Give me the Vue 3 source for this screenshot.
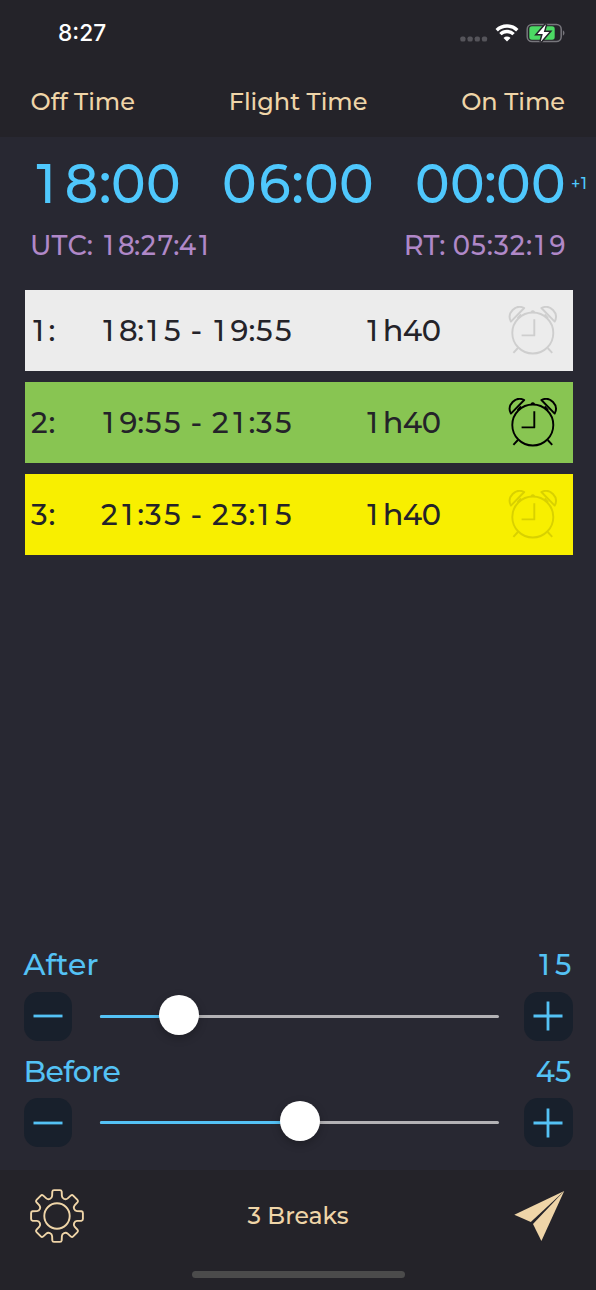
<template>
  <div class="screen">
    <header class="header">
      <div class="status">
        <span class="clock">8:27</span>
        <div class="indicators">
          <svg class="dots" width="28" height="6" viewBox="0 0 28 6">
            <rect v-for="n in 4" :key="n" :x="(n - 1) * 7.2 + 0.3" y="0.4" width="5.2" height="5.2" rx="1.9" />
          </svg>
          <svg class="wifi" width="24" height="18" viewBox="0 0 24 18">
            <path d="M1.7 6.2a14.8 14.8 0 0 1 20.6 0" />
            <path d="M5.4 10.1a9.5 9.5 0 0 1 13.2 0" />
            <path class="solid" d="M12 17.4 8.5 13.9a5 5 0 0 1 7 0Z" />
          </svg>
          <svg class="battery" width="39" height="20" viewBox="0 0 39 20">
            <rect class="shell" x="1.2" y="1.4" width="34" height="17.2" rx="4.8" />
            <path class="nub" d="M36.9 7.2q1.6 1 1.6 2.8t-1.6 2.8Z" />
            <rect class="level" x="3.3" y="3.3" width="25.4" height="13.4" rx="2.6" />
            <path class="bolt" d="M19.9 1.2 11.4 11h5.4l-2.1 7.8L23.2 9h-5.4Z" />
          </svg>
        </div>
      </div>
      <div class="labels">
        <span>Off Time</span>
        <span>Flight Time</span>
        <span>On Time</span>
      </div>
    </header>

    <main class="content">
      <div class="times">
        <Digits text="18:00" />
        <Digits text="06:00" />
        <span class="on-time"><Digits text="00:00" /><sup class="next-day">+1</sup></span>
      </div>
      <div class="counters">
        <Digits text="UTC: 18:27:41" />
        <Digits text="RT: 05:32:19" />
      </div>

      <ul class="breaks">
        <li v-for="item in breaks" :key="item.id" class="break" :class="item.color">
          <Digits :text="item.id + ':'" />
          <Digits :text="item.start + ' - ' + item.end" />
          <Digits :text="item.duration" />
          <svg class="alarm" :class="{ active: item.alarm }" width="50" height="50" viewBox="0 0 50 50">
            <circle cx="24.8" cy="27" r="20.5" />
            <path d="M26.3 13.2v16.2H13.6" />
            <path d="M2.9 15.6A10 10 0 0 1 16.2 2Z" />
            <path d="M46.7 15.6A10 10 0 0 0 33.4 2Z" />
            <path d="m13 8.5-3.4 3.6M36.6 8.5l3.4 3.6" />
            <path d="M9.9 42 5.4 46.9M39.7 42l4.5 4.9" />
            <path d="M23.3 6q1.5-1.8 3 0" />
          </svg>
        </li>
      </ul>

      <div class="sliders">
        <section v-for="slider in sliders" :key="slider.name" class="slider">
          <div class="slider-head">
            <span :class="slider.name.toLowerCase()">{{ slider.name }}</span>
            <Digits :text="String(slider.value)" />
          </div>
          <div class="slider-row">
            <button class="step" @click="change(slider, -5)">
              <svg width="30" height="30" viewBox="0 0 30 30"><path d="M.5 15h29" /></svg>
            </button>
            <div class="track">
              <div class="filled" :style="{ width: position(slider) + 'px' }"></div>
              <div class="thumb" :style="{ left: position(slider) + 'px' }"></div>
            </div>
            <button class="step" @click="change(slider, 5)">
              <svg width="30" height="30" viewBox="0 0 30 30"><path d="M.5 15h29M15 .5v29" /></svg>
            </button>
          </div>
        </section>
      </div>
    </main>

    <footer class="footer">
      <div class="toolbar">
        <svg class="gear" width="54" height="54" viewBox="-27 -27 54 54">
          <path :d="gearPath" />
          <circle r="12.7" />
        </svg>
        <span class="count">{{ breaks.length }} Breaks</span>
        <svg class="send" width="51" height="52" viewBox="0 0 51 52">
          <path d="M50.2 1 .3 24.7l16.5 7.4Z" />
          <path d="M50.2 1 19 34.1l8.4 17Z" />
        </svg>
      </div>
      <div class="home-bar"></div>
    </footer>
  </div>
</template>

<script setup>
import { ref, reactive, h } from 'vue';

// text whose digits all take the same width
const charClass = (c) => {
  if (c === '1') return 'digit one';
  if (/\d/.test(c)) return 'digit';
  if (c === ':') return 'colon';
  return c === ' ' ? 'space' : null;
};
const Digits = (props) =>
  h('span', { class: 'digits' }, [...props.text].map((c) => h('span', { class: charClass(c) }, c)));
Digits.props = ['text'];

const breaks = ref([
  { id: 1, start: '18:15', end: '19:55', duration: '1h40', color: 'white', alarm: false },
  { id: 2, start: '19:55', end: '21:35', duration: '1h40', color: 'green', alarm: true },
  { id: 3, start: '21:35', end: '23:15', duration: '1h40', color: 'yellow', alarm: false },
]);

const sliders = reactive([
  { name: 'After', value: 15, max: 90 },
  { name: 'Before', value: 45, max: 90 },
]);

// the thumb stays inside the 400px track
const position = (slider) => 19.5 + (slider.value / slider.max) * 361;

const change = (slider, step) => {
  slider.value = Math.min(slider.max, Math.max(0, slider.value + step));
};

// one tooth of the gear, repeated 8 times around the centre
const tooth = [
  ['C', [-5.7, -17.7], [-5, -18.4], [-4.9, -20]],
  ['L', [-4.7, -24.4]],
  ['Q', [-4.5, -25.9], [-3, -25.9]],
  ['L', [3, -25.9]],
  ['Q', [4.5, -25.9], [4.7, -24.4]],
  ['L', [4.9, -20]],
  ['C', [5, -18.4], [5.7, -17.7], [7.1, -17.1]],
];
const rotate = ([x, y], a) =>
  `${(x * Math.cos(a) - y * Math.sin(a)).toFixed(2)} ${(x * Math.sin(a) + y * Math.cos(a)).toFixed(2)}`;
let gearPath = 'M-7.1 -17.1';
for (let i = 0; i < 8; i++) {
  for (const [cmd, ...points] of tooth) {
    gearPath += cmd + points.map((p) => rotate(p, (i * Math.PI) / 4)).join(' ');
  }
}
gearPath += 'Z';
</script>

<style>
body {
  margin: 0;
  background: #282832;
}

.digits {
  display: inline-flex;
}

.digits .digit {
  display: flex;
  justify-content: center;
  width: 0.617em;
  transform: scaleX(0.95);
}

.digits .one {
  box-sizing: border-box;
  padding-right: 0.05em;
}

.digits .colon {
  display: flex;
  justify-content: center;
  width: 0.21em;
}

.digits .space {
  width: 0.3em;
  white-space: pre;
}

.times .digits .digit {
  transform: scaleX(0.92);
}
</style>

<style scoped>
.screen {
  display: flex;
  flex-direction: column;
  width: 596px;
  height: 1290px;
  overflow: hidden;
  background: #282832;
  font-family: Montserrat, Inter, sans-serif;
  font-weight: 500;
  white-space: nowrap;
}

svg {
  display: block;
  fill: none;
}

.header {
  height: 137px;
  background: #242329;
  color: #efd5a8;
}

.status {
  display: flex;
  justify-content: space-between;
  align-items: center;
  height: 66px;
  padding: 0 31px 0 58px;
}

.clock {
  color: #fff;
  font-family: Inter, sans-serif;
  font-size: 22.7px;
  font-weight: 550;
  line-height: 24px;
}

.indicators {
  display: flex;
  align-items: center;
}

.dots {
  margin: 11px 7px 0 0;
  fill: #55545a;
}

.wifi {
  margin-right: 7px;
  stroke: #fff;
  stroke-width: 3.4;
}

.wifi .solid {
  fill: #fff;
  stroke: none;
}

.shell {
  stroke: #77767c;
  stroke-width: 1.5;
}

.nub {
  fill: #77767c;
}

.level {
  fill: #4cd964;
}

.bolt {
  fill: #fff;
  stroke: #242329;
  stroke-width: 3;
  paint-order: stroke;
}

.labels {
  display: flex;
  justify-content: space-between;
  padding: 0 31px 0 30.5px;
  font-size: 24px;
  line-height: 71px;
}

.content {
  flex: 1;
  display: flex;
  flex-direction: column;
}

.times {
  display: flex;
  justify-content: space-between;
  height: 70px;
  padding: 11px 30px 0 29.5px;
  color: #4fc8fd;
  font-size: 56.5px;
  font-weight: 550;
  line-height: 70px;
}

.on-time {
  position: relative;
}

.next-day {
  position: absolute;
  left: 100%;
  top: 1px;
  margin-left: 5px;
  font-size: 16px;
  font-weight: 500;
  letter-spacing: 1px;
}

.counters {
  display: flex;
  justify-content: space-between;
  padding: 10px 30.5px 0 30px;
  color: #b088c8;
  font-size: 27.2px;
  line-height: 36px;
}

.breaks {
  display: flex;
  flex-direction: column;
  gap: 11.3px;
  margin: 26px 23.3px 0 24.5px;
  padding: 0;
  list-style: none;
}

.break {
  display: grid;
  grid-template-columns: 70px 264px 143.5px 50px;
  align-items: center;
  height: 80.7px;
  padding-left: 5.5px;
  color: #242329;
  font-size: 30.4px;
  font-weight: 550;
}

.white {
  background: #ececec;
}

.green {
  background: #88c552;
}

.yellow {
  background: #f8ef00;
}

.alarm {
  margin-top: 1px;
  stroke: #000;
  stroke-width: 1.9;
  stroke-linejoin: round;
  opacity: 0.12;
}

.alarm.active {
  opacity: 1;
}

.sliders {
  margin-top: auto;
  padding: 0 23.5px 16.5px;
  color: #54c2f5;
}

.slider {
  height: 106.5px;
}

.slider:last-child {
  height: 102px;
}

.slider-head {
  display: flex;
  justify-content: space-between;
  height: 46.5px;
  font-size: 30px;
  line-height: 40px;
}

.before {
  letter-spacing: -0.7px;
}

.slider-row {
  display: flex;
  align-items: center;
}

.step {
  display: flex;
  align-items: center;
  justify-content: center;
  width: 49px;
  height: 49px;
  padding: 0;
  border: none;
  border-radius: 14px;
  background: #18202c;
}

.step svg {
  stroke: #54c2f5;
  stroke-width: 2.8;
}

.track {
  position: relative;
  width: 400px;
  height: 3px;
  margin: 0 24.2px 0 27.3px;
  border-radius: 2px;
  background: #b3b2b5;
}

.filled {
  height: 3px;
  border-radius: 2px;
  background: #54c2f5;
}

.thumb {
  position: absolute;
  top: -20px;
  width: 40px;
  height: 40px;
  margin-left: -20px;
  border-radius: 50%;
  background: #fff;
  box-shadow: 0 3px 8px rgba(0, 0, 0, 0.25);
}

.footer {
  height: 120px;
  background: #242329;
  color: #efd5a8;
}

.toolbar {
  display: flex;
  justify-content: space-between;
  align-items: center;
  height: 91px;
  padding: 0 31px 0 30px;
  font-size: 23.5px;
}

.count {
  margin-right: 2px;
}

.gear {
  stroke: #efd5a8;
  stroke-width: 1.9;
}

.send {
  fill: #efd5a8;
}

.home-bar {
  width: 213px;
  height: 7px;
  margin: 10px auto 0;
  border-radius: 4px;
  background: #4b4b4b;
}
</style>
